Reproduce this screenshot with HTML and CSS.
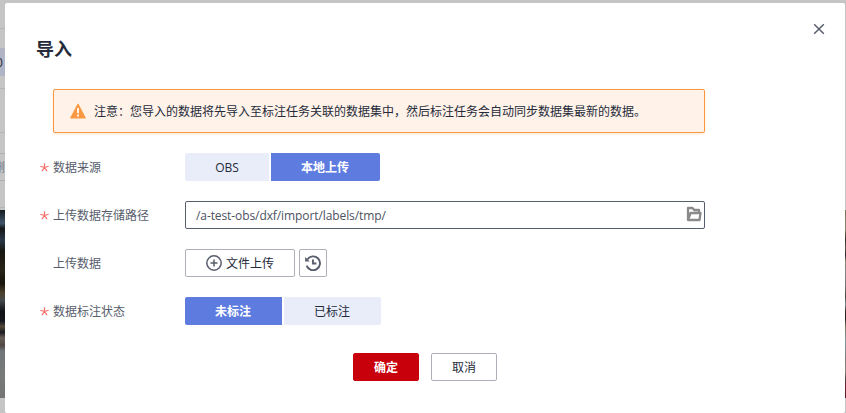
FILE: index.html
```html
<!DOCTYPE html>
<html lang="zh-CN">
<head>
<meta charset="utf-8">
<title>导入</title>
<link rel="stylesheet" href="styles.css">
</head>
<body>
<div class="page">
  <div class="backdrop backdrop-left">
    <div class="strip strip-top"></div>
    <div class="strip strip-gap"></div>
    <div class="strip strip-active"><span>0</span></div>
    <div class="strip strip-below"></div>
    <div class="strip strip-mid"></div>
    <div class="strip strip-space"></div>
    <div class="strip strip-tool"><span>删</span></div>
    <div class="strip strip-list"></div>
    <div class="photo photo-left"></div>
  </div>
  <main class="dialog">
    <header class="dialog-header">
      <h1>导入</h1>
      <svg class="close" viewBox="0 0 12 12"><path d="M1.2 1.2l9.6 9.6M10.8 1.2l-9.6 9.6"/></svg>
    </header>
    <div class="notice">
      <svg class="warn" viewBox="0 0 16 16"><path class="warn-shape" d="M8 .9L15.4 15H.6z"/><path class="warn-mark" d="M8 5v5.2M8 11.6v2"/></svg>
      <span>注意：您导入的数据将先导入至标注任务关联的数据集中，然后标注任务会自动同步数据集最新的数据。</span>
    </div>
    <div class="row">
      <div class="label"><svg class="star" viewBox="0 0 8 8"><path d="M4 4V.2M4 4L.3 2.9M4 4l3.7-1.1M4 4L1.7 7.3M4 4l2.3 3.3"/></svg>数据来源</div>
      <div class="tabs"><button class="tab tab-obs">OBS</button><button class="tab tab-on">本地上传</button></div>
    </div>
    <div class="row">
      <div class="label"><svg class="star" viewBox="0 0 8 8"><path d="M4 4V.2M4 4L.3 2.9M4 4l3.7-1.1M4 4L1.7 7.3M4 4l2.3 3.3"/></svg>上传数据存储路径</div>
      <div class="input"><span class="path">/a-test-obs/dxf/import/labels/tmp/</span>
        <svg class="folder" viewBox="0 0 16 16"><path d="M2 14V2h4.5l1.7 2H13v3M2 14h11.5l1-7H4.5z"/></svg>
      </div>
    </div>
    <div class="row">
      <div class="label"><span class="star"></span>上传数据</div>
      <div class="actions">
        <button class="button upload"><svg class="plus" viewBox="0 0 16 16"><circle cx="8" cy="8" r="7.2"/><path d="M8 4.5v7M4.5 8h7"/></svg><span>文件上传</span></button>
        <button class="button history"><svg class="clock" viewBox="0 0 16 16"><path d="M2.4 4.4A6.9 6.9 0 1 1 1.6 10.6M8 4.5v4h3.4"/><path class="arrow" d="M.1 2v4.4h4.6z"/></svg></button>
      </div>
    </div>
    <div class="row">
      <div class="label"><svg class="star" viewBox="0 0 8 8"><path d="M4 4V.2M4 4L.3 2.9M4 4l3.7-1.1M4 4L1.7 7.3M4 4l2.3 3.3"/></svg>数据标注状态</div>
      <div class="tabs"><button class="tab tab-on">未标注</button><button class="tab">已标注</button></div>
    </div>
    <footer class="footer">
      <button class="button confirm">确定</button>
      <button class="button cancel">取消</button>
    </footer>
  </main>
  <div class="backdrop backdrop-right"><div class="photo photo-right"></div></div>
</div>
</body>
</html>
```
FILE: styles.css
```css
* { box-sizing: border-box; }
body {
  margin: 0;
  background: #c5c5c5;
  color: #252b3a;
  font: 12px/18px "Open Sans", "Noto Sans CJK SC", sans-serif;
}
.page {
  display: grid;
  grid-template-columns: 5px 840px 1px;
  height: 413px;
  overflow: hidden;
}
.backdrop { overflow: hidden; height: 413px; }
.strip { overflow: hidden; }
.strip-top { height: 29px; border-bottom: 1px solid #b4b4b4; }
.strip-gap { height: 19px; }
.strip-active { height: 28px; background: #b0b4c4; line-height: 29px; }
.strip-active span { margin-left: -4px; color: #252b3a; }
.strip-below { height: 13px; border-bottom: 1px solid #b4b4b4; }
.strip-mid { height: 44px; border-bottom: 1px solid #b4b4b4; }
.strip-space { height: 20px; }
.strip-tool { height: 28px; border: solid #afafb4; border-width: 1px 0; line-height: 28px; }
.strip-tool span { margin-left: -7px; color: #777b88; }
.strip-list { height: 27px; border-bottom: 1px solid #b4b4b4; margin-bottom: 2px; }
.photo { height: 188px; }
.photo-left {
  background: linear-gradient(#141a20 0, #405568 7%, #151719 10%, #2c3948 16%, #171711 22%, #292318 32%, #17140e 39%, #4c402a 44%, #454a4c 48%, #111217 54%, #16171e 59%, #54483a 62%, #1b1b20 65%, #675d58 68%, #504846 72%, #707577 75%, #777a79 88%, #747474 100%);
}
.photo-right {
  margin-top: 210px;
  background: linear-gradient(#77745a 0, #878065 10%, #302b22 16%, #62554a 20%, #292126 24%, #84816b 27%, #858585 33%, #777 40%, #43473d 46%, #72888a 50%, #352727 54%, #24241d 58%, #77745b 62%, #819ca0 70%, #777 79%, #86807b 86%, #4e403c 90%, #6a2431 93%, #4c1520 100%);
}
.dialog {
  height: 410px;
  margin-top: 3px;
  padding: 32px 32px 0;
  border-radius: 2px;
  background: #fff;
}
.dialog-header { display: flex; height: 54px; justify-content: space-between; align-items: flex-start; }
h1 { margin: 0 0 0 -1px; font-size: 18px; line-height: 28px; font-weight: 700; }
.close { width: 12px; height: 12px; margin: -12px -12px 0 0; fill: none; stroke: #575d6c; stroke-width: 1.5; }
.notice {
  display: flex;
  align-items: center;
  width: 652px;
  height: 44px;
  margin: 0 0 20px 16px;
  padding-left: 16px;
  border: 1px solid #fa9841;
  border-radius: 2px;
  background: #fff2e8;
  box-shadow: 0 1px 3px #fa984140;
}
.notice span { padding-top: 2px; }
.warn { width: 16px; height: 16px; margin-right: 8px; }
.warn-shape { fill: #fa9841; stroke: #fa9841; stroke-linejoin: round; }
.warn-mark { stroke: #fff2e8; stroke-width: 2; }
.row { display: flex; height: 28px; margin-bottom: 20px; }
.label { display: flex; align-items: center; width: 148px; padding-top: 2px; color: #575d6c; }
.star { width: 9px; height: 9px; margin: -2px 4px 0 3px; fill: none; stroke: #f66f6a; stroke-width: 1.1; }
button { padding: 0; font: inherit; color: inherit; }
.tabs { display: flex; gap: 2px; }
.tab { width: 97px; padding: 2px 1px 0 0; border: 0; background: #e9edfa; }
.tab-obs { width: 84px; padding-right: 0; }
.tab-on { background: #5e7ce0; color: #fff; font-weight: 700; }
.tab:first-child { border-radius: 2px 0 0 2px; }
.tab:last-child { border-radius: 0 2px 2px 0; }
.tab-obs + .tab-on { width: 109px; }
.input {
  display: flex;
  align-items: center;
  justify-content: space-between;
  width: 520px;
  padding: 0 2px 0 10px;
  border: 1px solid #575d6c;
  border-radius: 2px;
}
.path { padding-top: 1px; color: #4c5261; letter-spacing: -0.09px; }
.folder { width: 16px; height: 16px; margin-top: -2px; fill: none; stroke: #8a8a8a; stroke-width: 2.3; stroke-linejoin: round; }
.actions { display: flex; gap: 4px; }
.button { display: flex; align-items: center; justify-content: center; height: 28px; border: 1px solid #adb0b8; border-radius: 2px; background: #fff; }
.upload { width: 110px; gap: 4px; }
.upload span { padding-top: 2px; }
.history { width: 28px; }
.plus, .clock { width: 16px; height: 16px; fill: none; stroke: #575d6c; stroke-width: 1.5; }
.clock { stroke-width: 1.9; }
.clock .arrow { fill: #575d6c; stroke: none; }
.footer { display: flex; justify-content: center; gap: 12px; margin-top: 28px; }
.footer .button { width: 66px; padding-top: 2px; }
.footer .confirm { border-color: #c7000b; background: #c7000b; color: #fff; font-weight: 700; }
```
